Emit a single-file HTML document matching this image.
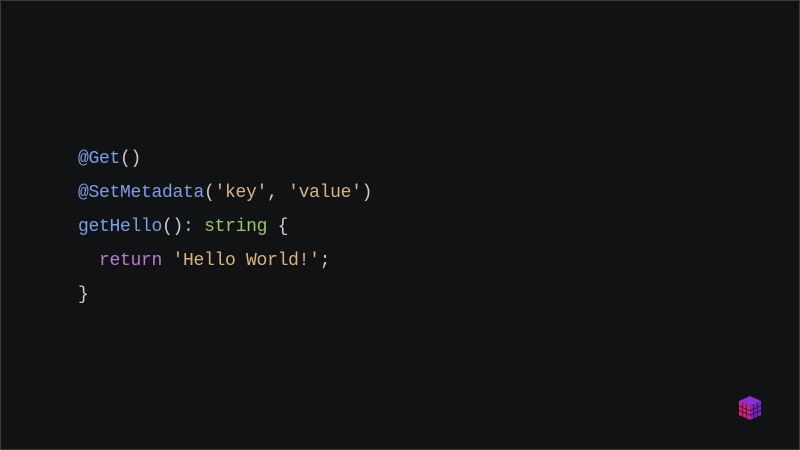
<!DOCTYPE html>
<html><head><style>
html,body{margin:0;padding:0}
body{width:800px;height:450px;background:#111214;position:relative;overflow:hidden;box-shadow:inset 0 0 0 1px #3a3b3d}
.l{position:absolute;left:78px;font-family:"Liberation Mono",monospace;font-size:18px;letter-spacing:-0.3px;white-space:pre;color:#c9ccd1;line-height:20px}
.b{color:#78a0e6}.s{color:#d9b57c}.g{color:#9cc563}.p{color:#b57ccf}.c{color:#7fc0d0}
</style></head><body>
<div class="l" style="top:149px"><span class="b">@Get</span>()</div>
<div class="l" style="top:183px"><span class="b">@SetMetadata</span>(<span class="s">'key'</span>, <span class="s">'value'</span>)</div>
<div class="l" style="top:217px"><span class="b">getHello</span>()<span class="c">:</span> <span class="g">string</span> {</div>
<div class="l" style="top:251px">  <span class="p">return</span> <span class="s">'Hello World!'</span>;</div>
<div class="l" style="top:285px">}</div>
<svg style="position:absolute;left:738px;top:395px" width="24" height="26" viewBox="0 0 24 26">
<polygon points="12,1 23,6 12,11 1,6" fill="#8b2fd6"/>
<polygon points="1,6 12,11 12,25 1,20" fill="#d8207a"/>
<polygon points="12,11 23,6 23,20 12,25" fill="#7a27c9"/>
<g stroke="#2a0f2a" stroke-width="0.8" fill="none">
<line x1="4.7" y1="7.7" x2="4.7" y2="21.7"/><line x1="8.3" y1="9.3" x2="8.3" y2="23.3"/>
<line x1="1" y1="10.7" x2="12" y2="15.7"/><line x1="1" y1="15.3" x2="12" y2="20.3"/>
<line x1="15.7" y1="9.3" x2="15.7" y2="23.3"/><line x1="19.3" y1="7.7" x2="19.3" y2="21.7"/>
<line x1="12" y1="15.7" x2="23" y2="10.7"/><line x1="12" y1="20.3" x2="23" y2="15.3"/>
</g></svg>
</body></html>
